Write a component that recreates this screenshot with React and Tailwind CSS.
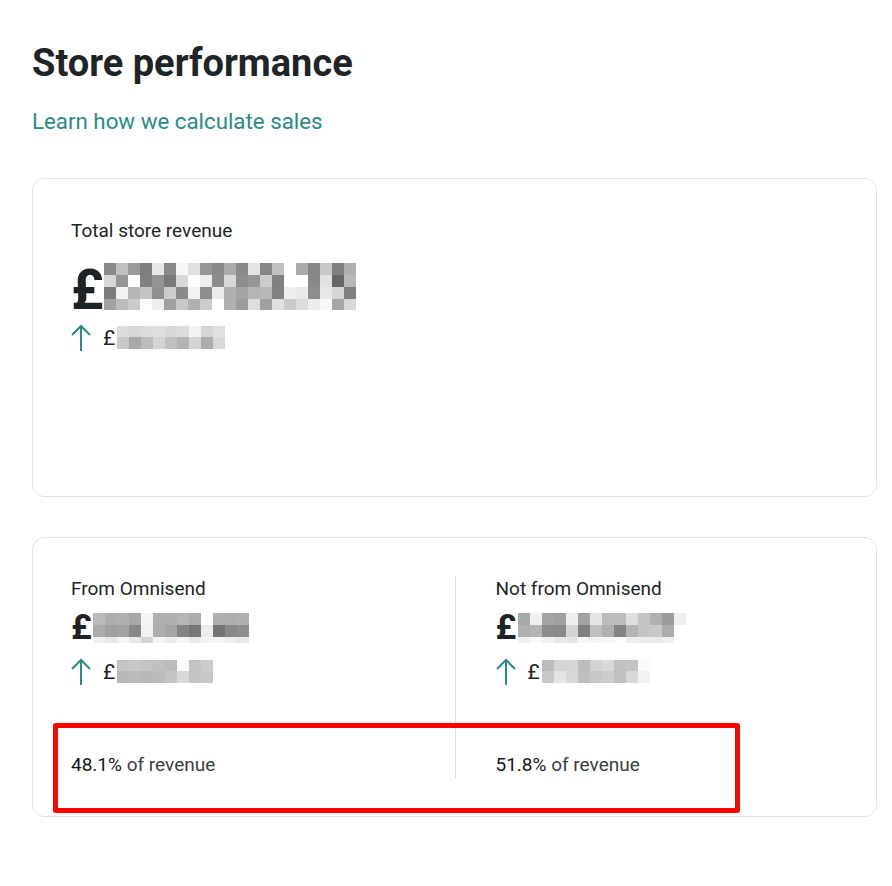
const bigTop = [
  ["8a", "c0", "9a", "7e", "e8", "8a", "f6", "e0", "96", "8a", "aa", "8a", "e4", "86", "c0", "ff", "aa", "86", "c8", "80", "b0"],
  ["d8", "96", "fc", "80", "94", "7a", "d8", "fe", "ee", "8c", "d8", "8e", "96", "cc", "80", "ff", "ff", "88", "e2", "66", "b8"],
  ["7c", "f2", "b6", "c4", "90", "cc", "8a", "f2", "8e", "ec", "b0", "a4", "b6", "b8", "82", "ee", "ea", "8e", "e8", "d6", "80"],
  ["a2", "bc", "ca", "fc", "ee", "a0", "c8", "b0", "cc", "ff", "b0", "9c", "de", "a0", "e0", "ca", "dc", "ec", "f8", "a6", "d8"],
];
const smallTop = [
  ["dc", "d8", "dc", "de", "d8", "dc", "f2", "d6", "e0"],
  ["c8", "a8", "bc", "d4", "c0", "b4", "d4", "ac", "d8"],
];
const bigLeft = [
  ["bb", "ae", "b0", "a8", "f4", "b0", "b0", "b6", "ac", "ff", "b0", "ae", "b0"],
  ["ac", "a0", "a2", "88", "f2", "ae", "a6", "84", "76", "ec", "74", "88", "8e"],
  ["f0", "e6", "f4", "e8", "d4", "f4", "ec", "f4", "e8", "f2", "f4", "ee", "e8"],
];
const smallLeft = [
  ["c4", "c8", "c4", "c0", "bc", "fa", "c4", "cc"],
  ["b8", "bc", "b8", "bc", "c4", "d8", "c4", "c8"],
];
const bigRight = [
  ["a8", "f0", "a4", "a0", "ee", "a2", "e6", "bc", "bc", "de", "c4", "b0", "9c", "ee"],
  ["b0", "b4", "8c", "8a", "d4", "80", "c0", "b0", "84", "b4", "c4", "c8", "ac", "ff"],
  ["f0", "fa", "f2", "e8", "e6", "f6", "f4", "f6", "fa", "ee", "ec", "ea", "f0", "ff"],
];
const smallRight = [
  ["bc", "d4", "d6", "bc", "d2", "d8", "c0", "c4", "fa"],
  ["c8", "e4", "d8", "c0", "c8", "cc", "c0", "d8", "f2"],
];

// pixelated (blurred-out) figure
function Mosaic({ rows, cell = 12, h, className = "" }) {
  const cols = rows[0].length;
  const heights = h || rows.map(() => cell);
  const total = heights.reduce((a, b) => a + b, 0);
  let y = 0;
  return (
    <svg
      width={cols * cell}
      height={total}
      viewBox={`0 0 ${cols * cell} ${total}`}
      className={className}
      shapeRendering="crispEdges"
    >
      {rows.map((row, r) => {
        const top = y;
        y += heights[r];
        return row.map((g, c) => (
          <rect
            key={`${r}-${c}`}
            x={c * cell}
            y={top}
            width={cell}
            height={heights[r]}
            fill={`#${g}${g}${g}`}
          />
        ));
      })}
    </svg>
  );
}

function Up() {
  return (
    <svg width="20" height="27" viewBox="0 0 20 27" fill="none" stroke="#2a8c85" strokeWidth="2">
      <path d="M1 11 L10 2 L19 11" />
      <path d="M10 2 V27" />
    </svg>
  );
}

const Change = ({ rows }) => (
  <div className="flex items-center">
    <Up />
    <span className="ml-[12px] text-[21px] leading-6 text-[#1d2324]">£</span>
    <Mosaic rows={rows} h={[11, 12]} className="ml-[2px]" />
  </div>
);

const Share = ({ value }) => (
  <p className="mb-[3px] text-[19px] leading-5 text-[#3a3f40]">
    <span className="text-[#121718]">{value}</span> of revenue
  </p>
);

export default function App() {
  return (
    <div
      className="min-h-screen bg-white pl-8 pr-[15px] pt-[40px] pb-10"
      style={{ fontFamily: "Roboto, 'Liberation Sans', sans-serif" }}
    >
      <h1 className="text-[38px] leading-[46px] font-bold text-[#1f2526]">Store performance</h1>
      <a className="block mt-[21px] text-[22.3px] leading-7 text-[#2a8c85]">Learn how we calculate sales</a>

      <div className="mt-[43px] h-[319px] rounded-xl border border-[#e3e5e5] px-[38px] pt-[42px]">
        <p className="text-[19px] leading-5 text-[#202526]">Total store revenue</p>
        <div className="mt-[26px] flex items-start">
          <span className="text-[55px] leading-[47px] font-bold text-[#1d2324]">£</span>
          <Mosaic rows={bigTop} h={[12, 12, 12, 11]} className="-mt-[4px]" />
        </div>
        <div className="mt-[10px]">
          <Change rows={smallTop} />
        </div>
      </div>

      <div className="relative mt-10 h-[280px] rounded-xl border border-[#e3e5e5] px-[38px] py-[38px]">
        <div className="grid h-full grid-cols-2">
          <div className="flex flex-col justify-between pt-[3px]">
            <div>
              <p className="text-[19px] leading-5 text-[#202526]">From Omnisend</p>
              <div className="mt-[14px] flex items-start">
                <span className="text-[35px] leading-[30px] font-bold text-[#1d2324]">£</span>
                <Mosaic rows={bigLeft} h={[12, 12, 6]} className="ml-[1px]" />
              </div>
              <div className="mt-[15px]">
                <Change rows={smallLeft} />
              </div>
            </div>
            <Share value="48.1%" />
          </div>
          <div className="flex flex-col justify-between border-l border-[#dcdfdf] pl-10 pt-[3px]">
            <div>
              <p className="text-[19px] leading-5 text-[#202526]">Not from Omnisend</p>
              <div className="mt-[14px] flex items-start">
                <span className="text-[35px] leading-[30px] font-bold text-[#1d2324]">£</span>
                <Mosaic rows={bigRight} h={[12, 12, 6]} className="ml-[2px]" />
              </div>
              <div className="mt-[15px]">
                <Change rows={smallRight} />
              </div>
            </div>
            <Share value="51.8%" />
          </div>
        </div>

        {/* annotation */}
        <div className="absolute left-[20px] top-[185px] h-[90px] w-[687px] rounded-[3px] border-[5px] border-[#ff0000]" />
      </div>
    </div>
  );
}
